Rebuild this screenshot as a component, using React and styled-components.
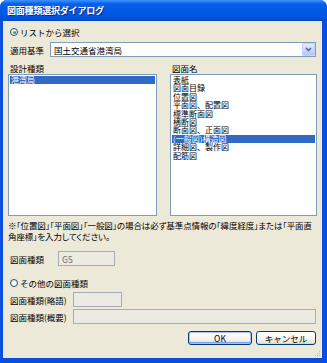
import React from 'react';
import styled, {createGlobalStyle} from 'styled-components';

const GlobalStyle = createGlobalStyle`
  html, body {
    margin: 0;
    padding: 0;
    background: #ffffff;
  }
  body {
    font-family: "Noto Sans CJK JP", "Noto Sans", sans-serif;
    font-size: 8.5px;
    color: #000;
  }
`;

const Window = styled.div`
  width: 327px;
  height: 363px;
  display: flex;
  flex-direction: column;
  background: #0a4ee0;
  border-radius: 7px 7px 0 0;
  overflow: hidden;
  box-sizing: border-box;
`;

const TitleBar = styled.div`
  height: 21px;
  flex-shrink: 0;
  display: flex;
  align-items: center;
  padding-left: 7px;
  background: linear-gradient(180deg, #3d95ff 0%, #0a5fea 18%, #0058e6 55%, #0053dc 85%, #0046c2 100%);
  color: #fff;
  font-weight: bold;
  font-size: 9px;
  letter-spacing: -0.2px;
  text-shadow: 1px 1px 0 #0a2c80;
`;

const Body = styled.div`
  flex: 1;
  margin: 0 5px 5px 3px;
  background: #ece9d8;
  display: flex;
  flex-direction: column;
  padding: 5px 5px 0 5px;
  position: relative;
`;

const RadioRow = styled.label`
  display: flex;
  align-items: center;
  gap: 2px;
  height: 12px;
  padding-left: 2px;
  margin-top: ${(p) => p.$top || 0}px;
`;

const Radio = styled.span`
  width: 8px;
  height: 8px;
  border-radius: 50%;
  border: 1px solid #1c5180;
  box-sizing: border-box;
  background: radial-gradient(circle at 60% 60%, #ffffff 30%, #dcdcd6 100%);
  display: flex;
  align-items: center;
  justify-content: center;

  &::after {
    content: '';
    width: 3px;
    height: 3px;
    border-radius: 50%;
    background: ${(p) => (p.$checked ? '#2fa82f' : 'transparent')};
  }
`;

const FieldRow = styled.div`
  display: flex;
  align-items: center;
  height: 15px;
  padding-left: 2px;
  margin-top: ${(p) => p.$top || 0}px;
`;

const Label = styled.span`
  width: ${(p) => p.$w}px;
  flex-shrink: 0;
  white-space: nowrap;
`;

const Select = styled.div`
  flex: 1;
  height: 15px;
  margin-right: 1px;
  box-sizing: border-box;
  border: 1px solid #7f9db9;
  background: #fff;
  display: flex;
  align-items: center;
  padding-left: 3px;
`;

const SelectText = styled.span`
  flex: 1;
`;

const DropButton = styled.span`
  width: 13px;
  height: 13px;
  box-sizing: border-box;
  border: 1px solid #c3d3fd;
  border-radius: 1px;
  background: linear-gradient(180deg, #e2eafe 0%, #c4d4fb 60%, #b7c9f6 100%);
  display: flex;
  align-items: center;
  justify-content: center;
`;

const Lists = styled.div`
  display: grid;
  grid-template-columns: 149px 147px;
  column-gap: 13px;
  margin-top: 5px;
`;

const ListColumn = styled.div`
  display: flex;
  flex-direction: column;
`;

const ListTitle = styled.div`
  height: 11px;
  padding-left: 2px;
  display: flex;
  align-items: center;
`;

const ListBox = styled.div`
  height: 142px;
  box-sizing: border-box;
  border: 1px solid #7f9db9;
  background: #fff;
  padding: 1px 1px;
  margin-top: 1px;
`;

const ListItem = styled.div`
  height: 8.4px;
  line-height: 8.4px;
  font-size: 8px;
  padding-left: 1px;
  white-space: nowrap;
  background: ${(p) => (p.$selected ? '#316ac5' : 'transparent')};
  color: ${(p) => (p.$selected ? '#fff' : '#000')};
`;

const Note = styled.p`
  margin: 4px 0 0 0;
  line-height: 10.5px;
  font-feature-settings: 'palt';
  white-space: nowrap;
  letter-spacing: -0.1px;
`;

const Input = styled.div`
  width: ${(p) => (p.$w ? `${p.$w}px` : 'auto')};
  flex: ${(p) => (p.$w ? '0 0 auto' : '1')};
  height: 15px;
  margin-right: 1px;
  box-sizing: border-box;
  border: 1px solid #a5acb2;
  background: #ebebe4;
  color: #6d6d6d;
  padding-left: 3px;
  display: flex;
  align-items: center;
`;

const Buttons = styled.div`
  display: flex;
  justify-content: flex-end;
  gap: 4px;
  margin-top: 7px;
  padding-right: 1px;
`;

const Button = styled.button`
  width: ${(p) => p.$w}px;
  height: 14px;
  padding: 0;
  font: inherit;
  font-size: 8.5px;
  border: 1px solid #003c74;
  border-radius: 3px;
  background: linear-gradient(180deg, #ffffff 0%, #f4f3ee 60%, #e5e2d8 90%, #d6d0c5 100%);
  box-shadow: ${(p) =>
    p.$default ? 'inset 0 0 0 1px #a8c3f0, inset 0 -1px 0 1px #7c9cea' : 'none'};
  color: #000;
`;

const Grip = styled.svg`
  position: absolute;
  right: 1px;
  bottom: 1px;
`;

const designTypes = ['港湾局'];
const drawingNames = [
  '表紙',
  '図面目録',
  '位置図',
  '平面図、配置図',
  '標準断面図',
  '横断図',
  '断面図、正面図',
  '(一般図)構造図',
  '詳細図、製作図',
  '配筋図',
];

export default function App() {
  return (
    <>
      <GlobalStyle />
      <Window>
        <TitleBar>図面種類選択ダイアログ</TitleBar>
        <Body>
          <RadioRow>
            <Radio $checked />
            リストから選択
          </RadioRow>
          <FieldRow $top={4}>
            <Label $w={40}>適用基準</Label>
            <Select>
              <SelectText>国土交通省港湾局</SelectText>
              <DropButton>
                <svg width="7" height="5" viewBox="0 0 7 5">
                  <path d="M1 1 L3.5 3.5 L6 1" fill="none" stroke="#4d6185" strokeWidth="1.4" />
                </svg>
              </DropButton>
            </Select>
          </FieldRow>
          <Lists>
            <ListColumn>
              <ListTitle>設計種類</ListTitle>
              <ListBox>
                {designTypes.map((d, i) => (
                  <ListItem key={d} $selected={i === 0}>
                    {d}
                  </ListItem>
                ))}
              </ListBox>
            </ListColumn>
            <ListColumn>
              <ListTitle>図面名</ListTitle>
              <ListBox>
                {drawingNames.map((d, i) => (
                  <ListItem key={d} $selected={i === 7}>
                    {d}
                  </ListItem>
                ))}
              </ListBox>
            </ListColumn>
          </Lists>
          <Note>
            ※「位置図」「平面図」「一般図」の場合は必ず基準点情報の「緯度経度」または「平面直
            <br />
            角座標」を入力してください。
          </Note>
          <FieldRow $top={10}>
            <Label $w={48}>図面種類</Label>
            <Input $w={57}>GS</Input>
          </FieldRow>
          <RadioRow $top={11}>
            <Radio />
            その他の図面種類
          </RadioRow>
          <FieldRow $top={3}>
            <Label $w={63}>図面種類(略語)</Label>
            <Input $w={49} />
          </FieldRow>
          <FieldRow $top={2}>
            <Label $w={63}>図面種類(概要)</Label>
            <Input />
          </FieldRow>
          <Buttons>
            <Button $w={64} $default>
              OK
            </Button>
            <Button $w={60}>キャンセル</Button>
          </Buttons>
          <Grip width="7" height="7" viewBox="0 0 7 7">
            <rect x="5" y="1" width="1" height="1" fill="#c3bfae" />
            <rect x="3" y="3" width="1" height="1" fill="#c3bfae" />
            <rect x="5" y="3" width="1" height="1" fill="#c3bfae" />
            <rect x="1" y="5" width="1" height="1" fill="#c3bfae" />
            <rect x="3" y="5" width="1" height="1" fill="#c3bfae" />
            <rect x="5" y="5" width="1" height="1" fill="#c3bfae" />
          </Grip>
        </Body>
      </Window>
    </>
  );
}
